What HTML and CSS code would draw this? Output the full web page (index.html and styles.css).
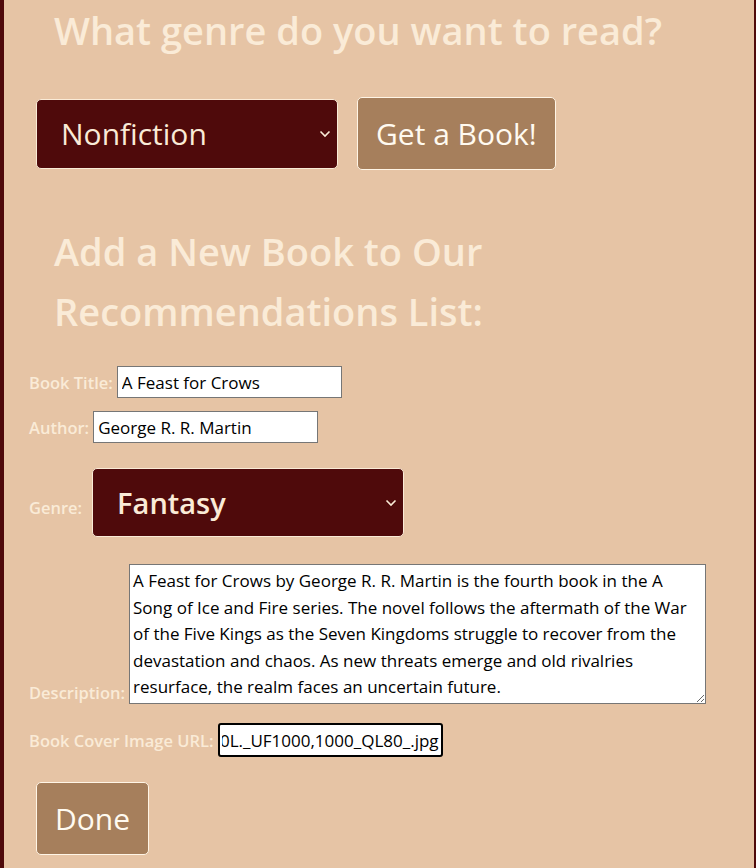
FILE: index.html
```html
<!DOCTYPE html>
<html lang="en">
<head>
<meta charset="utf-8">
<title>Book Recommendations</title>
<link rel="stylesheet" href="styles.css">
</head>
<body>
<main class="page">
  <section class="finder">
    <h1 class="heading">What genre do you want to read?</h1>
    <div class="picker">
      <select class="genre-select">
        <option>Nonfiction</option>
        <option>Fantasy</option>
      </select>
      <button class="btn" type="button">Get a Book!</button>
    </div>
  </section>
  <section class="adder">
    <h2 class="heading heading-sub">Add a New Book to Our Recommendations List:</h2>
    <form class="add-form">
      <div class="row"><label class="lbl">Book Title:</label><input class="field" type="text" value="A Feast for Crows"></div>
      <div class="row"><label class="lbl">Author:</label><input class="field" type="text" value="George R. R. Martin"></div>
      <div class="row row-genre"><label class="lbl">Genre:</label><select class="genre-select genre-select-bold"><option>Fantasy</option><option>Nonfiction</option></select></div>
      <div class="row row-end"><label class="lbl">Description:</label><textarea class="desc">A Feast for Crows by George R. R. Martin is the fourth book in the A Song of Ice and Fire series. The novel follows the aftermath of the War of the Five Kings as the Seven Kingdoms struggle to recover from the devastation and chaos. As new threats emerge and old rivalries resurface, the realm faces an uncertain future.</textarea></div>
      <div class="row"><label class="lbl">Book Cover Image URL:</label><input class="field field-focus" type="text" value="https://m.media-amazon.com/images/I/91L8n5R7x00L._UF1000,1000_QL80_.jpg"></div>
      <div class="actions"><button class="btn" type="button">Done</button></div>
    </form>
  </section>
</main>
</body>
</html>
```
FILE: styles.css
```css
html, body {
  margin: 0;
  padding: 0;
  background: #e6c4a5;
}
body {
  font-family: "Open Sans", "Noto Sans", sans-serif;
  overflow: hidden;
}
.page {
  box-sizing: border-box;
  width: 756px;
  min-height: 868px;
  border-left: 4px solid #4f0a0b;
  border-right: 2px solid #4f0a0b;
  background: #e6c4a5;
}
.heading {
  margin: 0;
  padding-left: 50px;
  color: #faebd7;
  font-size: 38px;
  font-weight: 600;
  line-height: 60px;
}
.picker {
  display: flex;
  align-items: center;
  gap: 19px;
  padding-left: 32px;
  margin-top: 37px;
}
.genre-select {
  appearance: none;
  -webkit-appearance: none;
  box-sizing: border-box;
  width: 302px;
  height: 70px;
  padding: 0 40px 0 24px;
  background: #4f0a0b url("data:image/svg+xml;utf8,<svg xmlns='http://www.w3.org/2000/svg' width='12' height='8' viewBox='0 0 12 8'><path d='M1.5 1.5 L6 6 L10.5 1.5' fill='none' stroke='%23faebd7' stroke-width='1.6'/></svg>") no-repeat right 6px center;
  color: #faebd7;
  border: 1px solid #faebd7;
  border-radius: 5px;
  font-family: inherit;
  font-size: 30px;
}
.genre-select-bold {
  width: 312px;
  height: 69px;
  margin-left: 6px;
  font-size: 29px;
  font-weight: 600;
}
.btn {
  box-sizing: border-box;
  height: 73px;
  padding: 0 18px;
  background: #a67f5c;
  color: #fffaf0;
  border: 1px solid #fff5e6;
  border-radius: 5px;
  font-family: inherit;
  font-size: 30px;
}
.adder {
  margin-top: 51px;
}
.add-form {
  padding-left: 25px;
  margin-top: 25px;
}
.row {
  display: flex;
  align-items: center;
  gap: 4px;
  margin-bottom: 13px;
}
.row-genre {
  align-items: baseline;
  margin-top: 25px;
  margin-bottom: 27px;
}
.row-end {
  align-items: flex-end;
  margin-bottom: 19px;
}
.lbl {
  color: #faebd7;
  font-size: 16.5px;
  font-weight: 600;
}
.field {
  box-sizing: border-box;
  width: 225px;
  height: 32px;
  padding: 1px 4px;
  border: 1px solid #767676;
  border-radius: 0;
  background: #fff;
  color: #000;
  font-family: inherit;
  font-size: 17px;
}
.field-focus {
  height: 34px;
  border: 2px solid #000;
  border-radius: 3px;
  padding: 1px 2px;
  direction: rtl;
  text-align: left;
}
.desc {
  box-sizing: border-box;
  width: 577px;
  height: 140px;
  padding: 3px 3px 1px;
  border: 1px solid #767676;
  background: #fff;
  color: #000;
  font-family: inherit;
  font-size: 17px;
  line-height: 26.5px;
  resize: both;
}
.actions {
  padding-left: 7px;
  margin-top: 25px;
}
```
